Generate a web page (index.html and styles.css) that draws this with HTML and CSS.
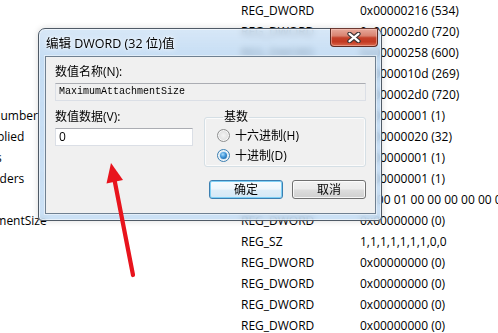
FILE: index.html
```html
<!DOCTYPE html>
<html lang="zh-CN">
<head>
<meta charset="utf-8">
<title>编辑 DWORD (32 位)值</title>
<link rel="stylesheet" href="styles.css">
</head>
<body>
<div class="regview">
  <div class="row"><span class="name">Height</span><span class="type">REG_DWORD</span><span class="data">0x00000216 (534)</span></div>
  <div class="row"><span class="name">Width</span><span class="type">REG_DWORD</span><span class="data">0x000002d0 (720)</span></div>
  <div class="row"><span class="name">Left</span><span class="type">REG_DWORD</span><span class="data">0x00000258 (600)</span></div>
  <div class="row"><span class="name">Top</span><span class="type">REG_DWORD</span><span class="data">0x0000010d (269)</span></div>
  <div class="row"><span class="name">Bottom</span><span class="type">REG_DWORD</span><span class="data">0x000002d0 (720)</span></div>
  <div class="row"><span class="name">MessagesCountNumber</span><span class="type">REG_DWORD</span><span class="data">0x00000001 (1)</span></div>
  <div class="row"><span class="name">ArchivedRulesApplied</span><span class="type">REG_DWORD</span><span class="data">0x00000020 (32)</span></div>
  <div class="row"><span class="name">ShowAllMessages</span><span class="type">REG_DWORD</span><span class="data">0x00000001 (1)</span></div>
  <div class="row"><span class="name">ShowEmailReminders</span><span class="type">REG_DWORD</span><span class="data">0x00000001 (1)</span></div>
  <div class="row"><span class="name">Layout</span><span class="type">REG_BINARY</span><span class="data">00 00 01 00 00 00 00 00 00 00 00</span></div>
  <div class="row"><span class="name">MaximumAttachmentSize</span><span class="type">REG_DWORD</span><span class="data">0x00000000 (0)</span></div>
  <div class="row"><span class="name">Columns</span><span class="type">REG_SZ</span><span class="data">1,1,1,1,1,1,1,0,0</span></div>
  <div class="row"><span class="name">Mode</span><span class="type">REG_DWORD</span><span class="data">0x00000000 (0)</span></div>
  <div class="row"><span class="name">Sort</span><span class="type">REG_DWORD</span><span class="data">0x00000000 (0)</span></div>
  <div class="row"><span class="name">View</span><span class="type">REG_DWORD</span><span class="data">0x00000000 (0)</span></div>
  <div class="row"><span class="name">Zoom</span><span class="type">REG_DWORD</span><span class="data">0x00000000 (0)</span></div>
</div>

<div class="dialog">
  <div class="titlebar">
    <span class="title">编辑 DWORD (32 位)值</span>
    <div class="close">
      <svg width="14" height="11" viewBox="0 0 14 11"><path d="M2.5 1.8 L11.5 9.2 M11.5 1.8 L2.5 9.2" stroke="#3d3434" stroke-width="4.4" stroke-linecap="round" fill="none"/><path d="M2.5 1.8 L11.5 9.2 M11.5 1.8 L2.5 9.2" stroke="#ffffff" stroke-width="2.2" stroke-linecap="round" fill="none"/></svg>
    </div>
  </div>
  <div class="client">
    <div class="label">数值名称(N):</div>
    <div class="field field-name">MaximumAttachmentSize</div>
    <div class="lower">
      <div class="left-col">
        <div class="label">数值数据(V):</div>
        <div class="field field-data">0</div>
      </div>
      <div class="right-col">
        <fieldset class="group">
          <legend>基数</legend>
          <div class="opt"><span class="radio"></span><span>十六进制(H)</span></div>
          <div class="opt"><span class="radio checked"></span><span>十进制(D)</span></div>
        </fieldset>
        <div class="buttons">
          <div class="btn default">确定</div>
          <div class="btn">取消</div>
        </div>
      </div>
    </div>
  </div>
</div>

<svg class="arrow" width="498" height="333" viewBox="0 0 498 333">
  <line x1="133" y1="275" x2="114.5" y2="180" stroke="#e8141d" stroke-width="4.2" stroke-linecap="round"/>
  <polygon points="111,163 106.5,183.5 123,180" fill="#e8141d"/>
</svg>
</body>
</html>
```

FILE: styles.css
```css
html, body {
  margin: 0;
  padding: 0;
  width: 498px;
  height: 333px;
  overflow: hidden;
  background: #ffffff;
}
body {
  position: relative;
  font-family: "Open Sans", "Noto Sans CJK SC", sans-serif;
  font-size: 12px;
  color: #000;
}

/* background registry list */
.regview {
  margin-left: -97px;
}
.row {
  display: grid;
  grid-template-columns: 338px 119px auto;
  height: 21px;
  line-height: 21px;
  white-space: nowrap;
}

/* dialog window */
.dialog {
  position: absolute;
  left: 38px;
  top: 28px;
  width: 344px;
  height: 193px;
  box-sizing: border-box;
  border: 1px solid #4f5a66;
  border-radius: 7px 7px 4px 4px;
  background:
    linear-gradient(to bottom, rgba(255,255,255,0.35), rgba(255,255,255,0.05) 30px, rgba(255,255,255,0.15)),
    rgba(170, 205, 238, 0.72);
  -webkit-backdrop-filter: blur(3px);
  backdrop-filter: blur(3px);
  box-shadow: inset 0 0 0 1px rgba(255,255,255,0.55), 0 0 6px rgba(0,0,0,0.15);
  display: flex;
  flex-direction: column;
  padding: 0 5px 6px 6px;
}
.titlebar {
  height: 27px;
  display: flex;
  align-items: center;
  padding-left: 1px;
}
.title {
  font-size: 12.5px;
  line-height: 16px;
  text-shadow: 0 0 6px rgba(255,255,255,0.9), 0 0 3px rgba(255,255,255,0.9);
  margin-top: 2px;
}
.close {
  margin-left: auto;
  margin-right: -2px;
  align-self: flex-start;
  margin-top: -1px;
  width: 48px;
  height: 19px;
  box-sizing: border-box;
  border: 1px solid #5e2b23;
  border-top-color: #6b3a33;
  border-radius: 0 0 4px 4px;
  background: linear-gradient(to bottom, #e7a99b 0%, #d98370 40%, #c4412a 52%, #c33a22 75%, #d9694e 100%);
  box-shadow: inset 0 0 0 1px rgba(255,210,200,0.45);
  display: flex;
  align-items: center;
  justify-content: center;
}
.close svg { display: block; }

.client {
  flex: 1;
  background: #f0f0f0;
  border: 1px solid #6f8091;
  box-shadow: 0 0 0 1px rgba(255,255,255,0.45);
  padding: 7px 9px 0 9px;
}
.label {
  line-height: 16px;
  height: 16px;
  white-space: nowrap;
}
.field {
  box-sizing: border-box;
  border: 1px solid #dbdfe6;
  border-top-color: #abadb3;
  margin-top: 3px;
  padding-left: 3px;
  white-space: nowrap;
}
.field-name {
  height: 18px;
  line-height: 16px;
  background: #f0f0f0;
  font-family: "Liberation Mono", monospace;
  font-size: 10px;
}
.field-data {
  width: 138px;
  height: 18px;
  line-height: 16px;
  background: #ffffff;
}
.lower {
  margin-top: 8px;
  display: flex;
  justify-content: space-between;
}
.right-col {
  width: 162px;
}
.group {
  margin: 0;
  padding: 0 0 1px 12px;
  border: 1px solid #d5dfe5;
  border-radius: 3px;
  box-shadow: inset 0 0 0 1px rgba(255,255,255,0.7);
}
.group legend {
  padding: 0 1px;
  margin-left: 6px;
  line-height: 16px;
}
.opt {
  display: flex;
  align-items: center;
  height: 20px;
  gap: 5px;
  white-space: nowrap;
}
.radio {
  width: 13px;
  height: 13px;
  box-sizing: border-box;
  border-radius: 50%;
  border: 1px solid #8e8f8f;
  background: radial-gradient(circle at 50% 50%, #f4f4f4 0, #e6e6e6 45%, #cfcfcf 100%);
  box-shadow: inset 0 0 0 1px #f8f8f8;
  display: flex;
  align-items: center;
  justify-content: center;
}
.radio.checked {
  border-color: #3c7fb1;
  background: radial-gradient(circle at 50% 50%, #e8f4fc 0, #cfe6f6 60%, #b9d9ef 100%);
}
.radio.checked::after {
  content: "";
  width: 7px;
  height: 7px;
  border-radius: 50%;
  background: radial-gradient(circle at 40% 35%, #a9dcfb 0, #3f95d9 45%, #14558f 100%);
}
.buttons {
  margin-top: 13px;
  display: flex;
  justify-content: flex-end;
  gap: 9px;
}
.btn {
  width: 74px;
  height: 19px;
  box-sizing: border-box;
  border: 1px solid #707070;
  border-radius: 3px;
  background: linear-gradient(to bottom, #f2f2f2 0%, #ebebeb 48%, #dddddd 52%, #cfcfcf 100%);
  box-shadow: inset 0 0 0 1px rgba(255,255,255,0.8);
  text-align: center;
  line-height: 17px;
}
.btn.default {
  border-color: #3c7fb1;
  background: linear-gradient(to bottom, #f6fbfe 0%, #eef6fb 48%, #dfeef8 52%, #d4e8f6 100%);
  box-shadow: inset 0 0 0 1px #7fd0f5;
}

.arrow {
  position: absolute;
  left: 0;
  top: 0;
  pointer-events: none;
}
```
